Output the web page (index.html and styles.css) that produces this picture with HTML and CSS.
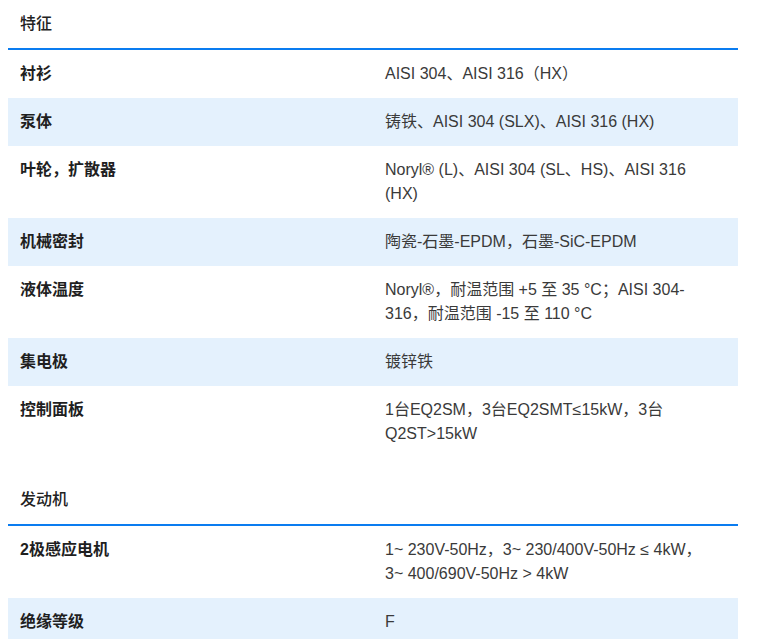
FILE: index.html
```html
<!DOCTYPE html>
<html lang="zh-CN">
<head>
<meta charset="utf-8">
<link rel="stylesheet" href="styles.css">
</head>
<body>
<section class="spec">
  <div class="spec-head">特征</div>
  <div class="row"><div class="k">衬衫</div><div class="v">AISI 304、AISI 316（HX）</div></div>
  <div class="row alt"><div class="k">泵体</div><div class="v">铸铁、AISI 304 (SLX)、AISI 316 (HX)</div></div>
  <div class="row"><div class="k">叶轮，扩散器</div><div class="v">Noryl® (L)、AISI 304 (SL、HS)、AISI 316 (HX)</div></div>
  <div class="row alt"><div class="k">机械密封</div><div class="v">陶瓷-石墨-EPDM，石墨-SiC-EPDM</div></div>
  <div class="row"><div class="k">液体温度</div><div class="v">Noryl®，耐温范围 +5 至 35 °C；AISI 304-316，耐温范围 -15 至 110 °C</div></div>
  <div class="row alt"><div class="k">集电极</div><div class="v">镀锌铁</div></div>
  <div class="row"><div class="k">控制面板</div><div class="v">1台EQ2SM，3台EQ2SMT≤15kW，3台Q2ST&gt;15kW</div></div>
</section>
<section class="spec">
  <div class="spec-head">发动机</div>
  <div class="row"><div class="k">2极感应电机</div><div class="v">1~ 230V-50Hz，3~ 230/400V-50Hz ≤ 4kW，3~ 400/690V-50Hz &gt; 4kW</div></div>
  <div class="row alt"><div class="k">绝缘等级</div><div class="v">F</div></div>
</section>
</body>
</html>
```
FILE: styles.css
```css
html, body {
  margin: 0;
  padding: 0;
  background: #fff;
}
body {
  padding: 0 39px 0 8px;
  font-family: "Liberation Sans", "Noto Sans CJK SC", sans-serif;
  font-size: 16px;
  line-height: 24px;
  color: #333;
}
.spec {
  margin-bottom: 18px;
}
.spec-head {
  padding: 12px;
  font-weight: 500;
  color: #222;
  border-bottom: 2px solid #0a7cf0;
}
.row {
  display: grid;
  grid-template-columns: 1fr 1fr;
}
.row.alt {
  background: #e4f1fd;
}
.k, .v {
  padding: 12px;
}
.k {
  font-weight: 700;
  color: #1f1f1f;
}
.v {
  color: #3a3a3a;
  padding-right: 22px;
}
```
